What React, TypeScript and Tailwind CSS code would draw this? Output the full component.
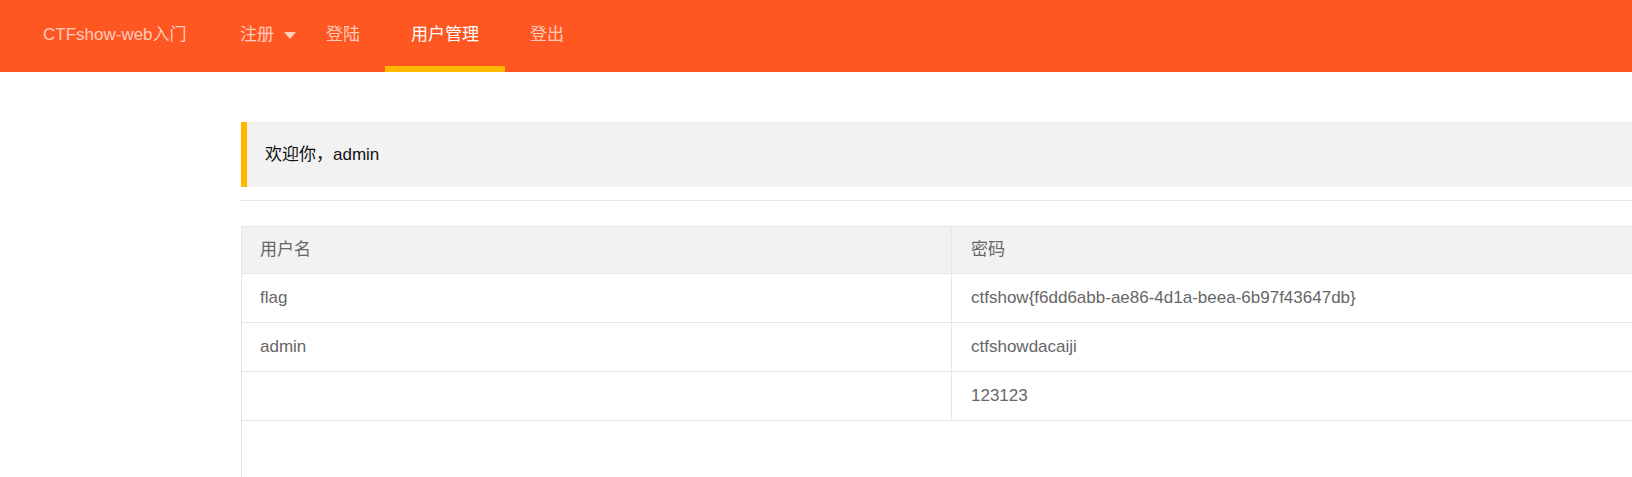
const font = {
  fontFamily:
    '"Liberation Sans", Arial, "Noto Sans CJK SC", sans-serif',
};

const users = [
  { name: "flag", pass: "ctfshow{f6dd6abb-ae86-4d1a-beea-6b97f43647db}" },
  { name: "admin", pass: "ctfshowdacaiji" },
  { name: "", pass: "123123" },
];

function Header() {
  return (
    <div className="flex h-[72px] items-stretch bg-[#FF5722] text-[17px] text-white/70">
      {/* logo */}
      <div className="flex w-[216px] shrink-0 items-center pb-[3px] pl-[43px]">
        CTFshow-web入门
      </div>

      <ul className="flex items-stretch">
        <li className="flex items-center pb-[3px] pl-[24px] pr-[6px]">
          注册
          <span className="ml-[10px] mt-[2px] h-0 w-0 border-x-[6px] border-t-[7px] border-x-transparent border-t-white/70" />
        </li>
        <li className="flex items-center pb-[3px] pl-[24px] pr-[25px]">登陆</li>
        <li className="relative flex w-[120px] items-center justify-center pb-[3px] text-white">
          用户管理
          <span className="absolute bottom-0 left-0 h-[6px] w-full bg-[#FFB800]" />
        </li>
        <li className="flex items-center pb-[3px] pl-[25px] pr-[24px]">登出</li>
      </ul>
    </div>
  );
}

export default function App() {
  return (
    <div className="min-h-[477px] w-full overflow-hidden bg-white" style={font}>
      <Header />

      <div className="ml-[241px] w-[1440px] pt-[50px]">
        {/* welcome */}
        <div className="flex h-[65px] items-center border-l-[6px] border-[#FFB800] bg-[#F2F2F2] pl-[18px] text-[17px] text-[#111]">
          欢迎你，admin
        </div>

        <hr className="mt-[13px] border-t border-[#e6e6e6]" />

        {/* user table */}
        <div className="mt-[25px] h-[260px] border-l border-t border-[#e6e6e6] text-[17px] text-[#666]">
          <div className="flex h-[47px] border-b border-[#e6e6e6] bg-[#F2F2F2]">
            <div className="flex w-[710px] items-center border-r border-[#e6e6e6] pl-[18px]">
              用户名
            </div>
            <div className="flex flex-1 items-center pl-[19px]">密码</div>
          </div>

          {users.map((u, i) => (
            <div key={i} className="flex h-[49px] border-b border-[#e6e6e6]">
              <div className="flex w-[710px] items-center border-r border-[#e6e6e6] pl-[18px]">
                {u.name}
              </div>
              <div className="flex flex-1 items-center pl-[19px]">{u.pass}</div>
            </div>
          ))}
        </div>
      </div>
    </div>
  );
}
